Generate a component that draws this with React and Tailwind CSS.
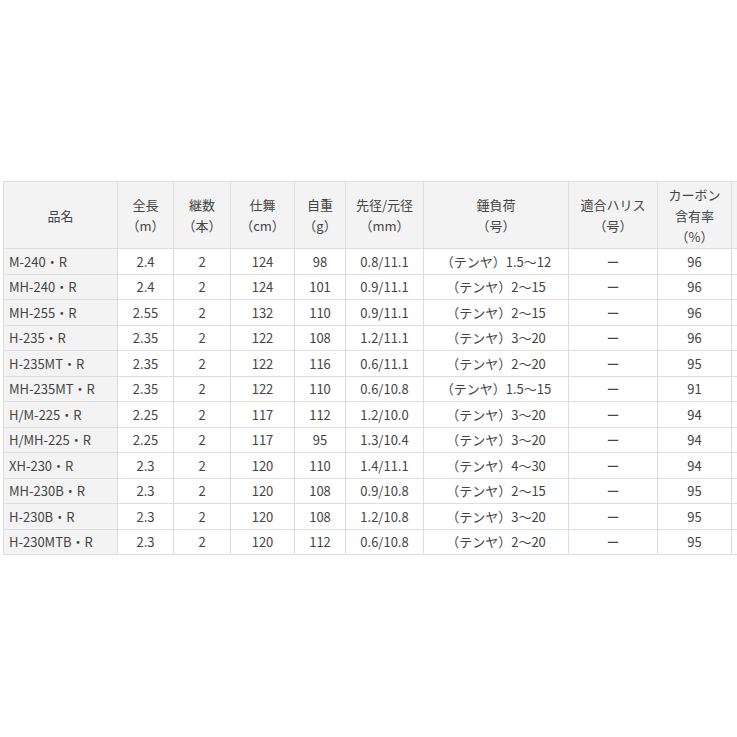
import React from "react";

const rows = [
  ["M-240・R", "2.4", "2", "124", "98", "0.8/11.1", "（テンヤ）1.5～12", "ー", "96"],
  ["MH-240・R", "2.4", "2", "124", "101", "0.9/11.1", "（テンヤ）2～15", "ー", "96"],
  ["MH-255・R", "2.55", "2", "132", "110", "0.9/11.1", "（テンヤ）2～15", "ー", "96"],
  ["H-235・R", "2.35", "2", "122", "108", "1.2/11.1", "（テンヤ）3～20", "ー", "96"],
  ["H-235MT・R", "2.35", "2", "122", "116", "0.6/11.1", "（テンヤ）2～20", "ー", "95"],
  ["MH-235MT・R", "2.35", "2", "122", "110", "0.6/10.8", "（テンヤ）1.5～15", "ー", "91"],
  ["H/M-225・R", "2.25", "2", "117", "112", "1.2/10.0", "（テンヤ）3～20", "ー", "94"],
  ["H/MH-225・R", "2.25", "2", "117", "95", "1.3/10.4", "（テンヤ）3～20", "ー", "94"],
  ["XH-230・R", "2.3", "2", "120", "110", "1.4/11.1", "（テンヤ）4～30", "ー", "94"],
  ["MH-230B・R", "2.3", "2", "120", "108", "0.9/10.8", "（テンヤ）2～15", "ー", "95"],
  ["H-230B・R", "2.3", "2", "120", "108", "1.2/10.8", "（テンヤ）3～20", "ー", "95"],
  ["H-230MTB・R", "2.3", "2", "120", "112", "0.6/10.8", "（テンヤ）2～20", "ー", "95"],
];

const widths = ["w-[114px]", "w-[56px]", "w-[57px]", "w-[64px]", "w-[51px]", "w-[78px]", "w-[145px]", "w-[89px]", "w-[74px]", "w-[60px]"];

const headers = [
  ["品名"],
  ["全長", "（m）"],
  ["継数", "（本）"],
  ["仕舞", "（cm）"],
  ["自重", "（g）"],
  ["先径/元径", "（mm）"],
  ["錘負荷", "（号）"],
  ["適合ハリス", "（号）"],
  ["カーボン", "含有率", "（%）"],
  [""],
];

export default function App() {
  return (
    <div className="w-[737px] h-[737px] overflow-hidden bg-white pt-[181px] pl-[3px]" style={{ fontFamily: '"Noto Sans CJK JP", "Noto Sans", sans-serif' }}>
      <table className="table-fixed border-collapse w-[788px] text-[13px] text-[#444] leading-[17px]">
        <colgroup>
          {widths.map((w, i) => (
            <col key={i} className={w} />
          ))}
        </colgroup>
        <thead>
          <tr className="h-[67px] bg-[#f3f3f3]">
            {headers.map((h, i) => (
              <th key={i} className="border border-[#dedede] font-normal text-center align-middle px-1 leading-[21px]">
                {h.map((l, j) => (
                  <div key={j}>{l}</div>
                ))}
              </th>
            ))}
          </tr>
        </thead>
        <tbody>
          {rows.map((r, i) => (
            <tr key={i} className="h-[25.5px]">
              {r.map((c, j) => (
                <td
                  key={j}
                  className={
                    j === 0
                      ? "border border-[#dedede] bg-[#f3f3f3] text-left pl-[5px] whitespace-nowrap"
                      : "border border-[#dedede] text-center whitespace-nowrap"
                  }
                >
                  {c}
                </td>
              ))}
              <td className="border border-[#dedede]"></td>
            </tr>
          ))}
        </tbody>
      </table>
    </div>
  );
}
